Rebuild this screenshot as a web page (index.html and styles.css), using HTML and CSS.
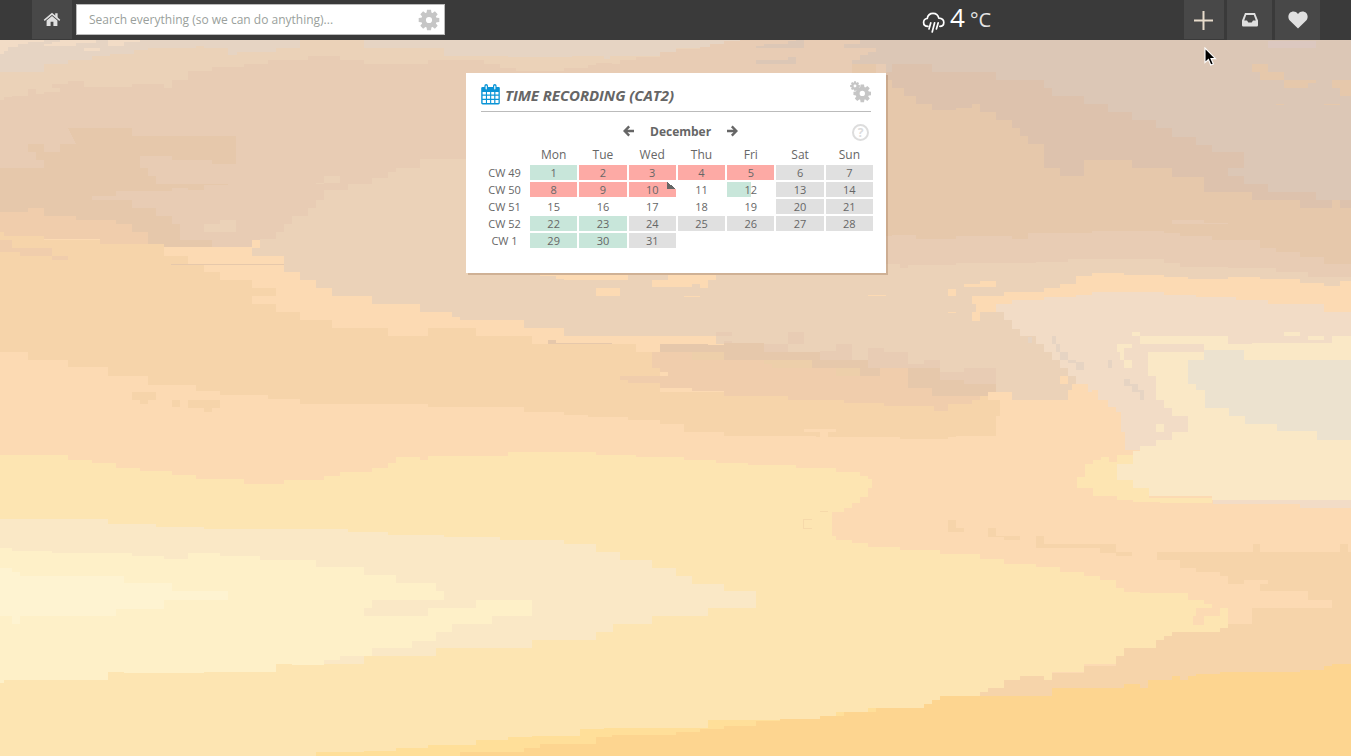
FILE: index.html
```html
<!DOCTYPE html>
<html lang="en">
<head>
<meta charset="utf-8">
<title>Time Recording</title>
<link rel="stylesheet" href="styles.css">
</head>
<body>
<svg class="wallpaper" viewBox="0 0 1351 756" shape-rendering="crispEdges" aria-hidden="true">
  <defs>
    <g id="gear">
      <circle cx="0" cy="0" r="5.4" fill="none" stroke="currentColor" stroke-width="4.6"/>
      <path fill="currentColor" d="M-2-10.3H2L2.6-6H-2.6ZM-2 10.3H2L2.6 6H-2.6ZM-10.3-2V2L-6 2.6V-2.6ZM10.3-2V2L6 2.6V-2.6Z"/>
      <path transform="rotate(45)" fill="currentColor" d="M-2-10.3H2L2.6-6H-2.6ZM-2 10.3H2L2.6 6H-2.6ZM-10.3-2V2L-6 2.6V-2.6ZM10.3-2V2L6 2.6V-2.6Z"/>
    </g>
  </defs>
  <path class="sand" d="M0 40H1351V756H0Z"/>
  <path class="mist" d="M0 40H300V48H276V52H237V55H228V48H204V46H196V48H148V50H134V54H110V56H92V60H68V64H44V72H0ZM364 40H740V41H724V44H710V47H700V48H676V52H660V56H610V59H604V56H572V57H508V56H444V48H364Z"/>
  <path class="shell" d="M0 40H44V42H28V44H18V47H8V51H4V54H0ZM52 42H60V40H96V43H76V46H44V44H52ZM108 40H140V42H124V46H108ZM84 48H100V51H84Z"/>
  <path class="rose" d="M0 100H4V97H12V96H28V89H36V94H44V92H60V88H52V84H68V81H84V87H132V84H164V88H172V80H188V71H212V67H244V64H268V60H308V56H340V60H364V64H428V60H484V64H500V68H516V71H564V68H588V65H596V63H612V64H620V60H636V57H660V52H676V49H700V47H710V44H724V41H740V40H886V159H420V168H396V172H388V178H372V184H348V190H324V200H316V208H308V216H292V224H284V232H276V239H260V240H252V247H0Z"/>
  <path class="sand" d="M324 176H340V183H316V184H324ZM204 224H220V220H236V232H204Z"/>
  <path class="tan" d="M68 128H132V136H236V164H212V160H172V156H140V168H148V176H156V184H228V185H204V190H188V188H172V191H116V196H92V200H132V208H156V216H172V224H180V240H212V247H140V240H0V168H44V160H36V152H28V144H44V152H60V144H76Z"/>
  <path class="apricot" d="M0 212H28V208H44V216H76V220H116V224H132V232H148V247H0Z"/>
  <path class="peach" d="M0 232H4V236H44V239H100V244H140V247H252V240H260V248H252V256H284V272H300V280H316V288H332V296H372V304H420V312H452V317H460V320H524V328H564V336H716V344H780V360H860V368H908V384H932V392H1012V400H1068V390H1351V756H0Z"/>
  <path class="peach" d="M540 275H628V280H564V279H556V276H540ZM596 288H620V296H596ZM668 275H716V280H708V288H700V284H692V287H652V280H668ZM684 296H700V297H684ZM868 295H908V296H868Z"/>
  <path class="wheat" d="M0 232H4V236H44V240H100V244H164V256H188V264H204V272H220V280H252V288H276V296H252V304H276V312H300V320H332V328H388V336H428V328H476V336H532V344H636V352H660V392H1000V416H996V436H956V437H948V439H900V437H816V436H724V432H684V424H660V420H628V417H588V415H564V412H524V407H428V404H300V399H268V395H220V391H196V385H148V376H108V367H68V360H28V352H0Z"/>
  <path class="peach" d="M804 429H836V432H828V437H820V432H804Z"/>
  <path class="apricot" d="M0 240H12V248H52V256H20V252H0ZM52 256H68V260H52ZM652 352H850V368H908V384H980V400H972V404H948V411H934V406H884V403H844V400H788V396H724V391H692V388H660V383H628V380H620V376H668V372H660V368H652Z"/>
  <path class="tan" d="M171 264H284V265H171ZM548 340H556V343H612V344H548ZM660 344H708V345H724V343H764V352H820V360H880V376H908V364H940V376H964V384H996V396H932V388H908V376H860V368H812V360H724V352H660Z"/>
  <path class="rose" d="M716 332H732V336H716ZM724 341H732V343H724ZM764 344H788V352H764ZM788 332H804V344H788ZM836 344H852V360H820V351H836ZM868 348H884V352H908V364H924V360H940V372H964V368H996V384H964V380H940V368H868Z"/>
  <path class="straw" d="M724 352V360H692V352ZM764 360H812V368H772V364H764ZM836 368H860V376H836Z"/>

  <path class="clay" d="M860 40H1351V264H886V73H886V64H852V60H860V55H868V52H876V48H844V44H860ZM804 40V48H756V46H764V44H788V41ZM796 57V64H756V60H788V57Z"/>
  <path class="tan" d="M852 64H876V73H852Z"/>
  <path class="umber" d="M892 64H932V72H996V80H1044V88H1052V96H1084V104H1108V112H1132V120H1156V128H1172V137H1196V145H1212V152H1244V168H1228V176H1244V184H1268V192H1316V200H1351V208H886V72H892Z"/>
  <path class="tan" d="M886 80H892V88H904V96H916V104H932V110H956V108H972V104H980V112H996V120H1012V128H1020V136H1028V144H1044V168H1060V176H1084V160H1132V168H1172V177H1204V192H1252V200H1300V208H1332V200H1340V208H1351V280H886Z"/>
  <path class="tan" d="M1252 64H1268V72H1284V80H1316V83H1308V88H1284V80H1260V72H1252ZM1332 80H1351V96H1340V88H1332ZM1276 104H1284V105H1276ZM1324 104H1340V105H1324Z"/>
  <path class="blush" d="M1268 41H1316V48H1268Z"/>
  <path class="rose" d="M886 236H892V235H916V239H956V236H1012V239H1028V233H1092V231H1164V233H1180V236H1212V240H1260V248H1276V252H1300V257H1324V264H1351V290H886ZM1172 220H1204V223H1228V224H1172Z"/>
  <path class="sand" d="M886 264H900V268H908V265H956V263H1036V262H1068V259H1164V263H1180V267H1228V268H1276V272H1308V277H1351V312H886Z"/>
  <path class="peach" d="M940 287H964V284H980V281H996V287ZM948 289H956V296H948ZM972 296H1004V292H1044V288H1060V284H1076V276H1092V273H1124V275H1164V277H1188V279H1228V277H1260V279H1300V283H1324V286H1340V281H1351V312H1324V304H1012V304H996V312H980V321H972V312H976V304H972ZM1060 376H1068V384H1088V392H1072V384H1060ZM988 392H1012V400H988ZM948 312H956V313H948Z"/>
  <path class="shell" d="M996 304H1012V300H1044V297H1076V295H1092V292H1164V295H1196V297H1236V300H1268V304H1324V312H1351V508H1300V504H1213V450H1125V432H1121V412H1116V407H1108V400H1098V390H1092V392H1088V384H1076V376H1068V368H1060V360H1052V352H1044V344H1036V336H1020V329H1012V320H1004V312H996Z"/>
  <path class="mist" d="M1052 336H1056V344H1060V352H1068V360H1076V362H1084V370H1076V363H1068V360H1060V352H1056V344H1052ZM1108 360H1112V368H1108ZM1028 337H1032V343H1028ZM1124 379H1130V384H1138V390H1144V400H1140V392H1132V386H1124Z"/>
  <path class="butter" d="M1077 488V477H1085V464H1093V460H1101V457H1109V462H1117V455H1133V480H1149V498H1212V503H1160V502H1133V500H1117V496H1093V488Z"/>
  <path class="cream" d="M1132 332H1140V336H1228V344H1252V343H1351V500H1212V496H1149V488H1133V480H1117V464H1133V451H1140V446H1156V440H1172V432H1188V416H1172V408H1164V400H1156V376H1148V352H1204V344H1140V336H1132ZM1117 344H1132V348H1124V360H1132V368H1124V360H1120V352H1117ZM1284 332H1300V336H1284ZM1308 336H1324V340H1308ZM1332 336H1351V343H1332ZM1156 424H1164V432H1156Z"/>
  <path class="fog" d="M1188 360H1204V350H1244V360H1351V440H1317V431H1277V424H1245V416H1229V408H1205V390H1196V384H1188Z"/>

  <path class="butter" d="M0 455H36V455H68V460H92V463H116V468H140V471H172V475H196V479H244V484H284V480H324V476H340V472H372V468H388V463H396V457H420V460H428V456H508V452H596V455H636V457H684V460H716V463H748V465H796V468H836V472H860V476H868V479H872V488H868V497H860V503H852V508H844V512H832V536H836V540H852V543H868V547H900V550H940V554H980V559H1004V564H1036V567H1060V572H1084V576H1100V580H1116V588H1124V592H1140V593H1188V600H1204V604H1212V608H1228V632H1172V636H1164V642H1188V645H1172V648H1124V664H1084V672H1052V756H0Z"/>
  <path class="wheat" d="M1157 552H1351V700H940V696H980V692H988V688H1004V680H1020V676H1044V680H1052V673H1084V666H1116V656H1124V648H1156V640H1164V636H1172V632H1220V628H1228V624H1252V608H1308V600H1308V591H1260V584H1228V576H1220V572H1196V568H1180V560H1157ZM948 520H956V528H964V532H948ZM988 528H996V536H1020V540H1004V537H988ZM1036 536H1044V544H1116V552H1132V556H1116V553H1100V548H1036ZM132 392H156V400H148V404H140V400H132ZM172 400H180V407H172ZM188 400H220V408H212V412H204V408H188ZM1253 544H1260V552H1253ZM1340 544H1348V552H1340Z"/>
  <path class="peach" d="M1260 600H1332V608H1252V624H1236V608H1260ZM1196 608H1220V616H1204V625H1193V616H1196ZM1244 580H1268V584H1244Z"/>
  <path class="trace" d="M812 519.5H803.5V528.5H812M820 511.5H828"/>
  <path class="cream" d="M0 519H108V524H156V527H204V529H348V532H388V535H444V537H500V540H564V544H596V552H620V560H652V568H676V576H692V584H724V591H756V608H708V616H652V624H613V632H596V640H532V648H436V656H364V664H276V560H0Z"/>
  <path class="vanilla" d="M0 548H12V551H52V553H132V556H164V559H188V553H220V556H260V560H316V567H364V575H396V583H436V591H444V600H372V608H364V616H428V608H476V600H524V600H532V616H492V624H452V632H436V641H412V648H372V656H340V660H324V665H292V664H276V672H204V673H124V672H108V680H4V683H0Z"/>
  <path class="ivory" d="M0 568H12V572H20V576H124V583H172V591H228V600H164V609H116V616H20V624H12V616H0Z"/>
  <path class="honey" d="M316 756V752H364V751H396V748H428V745H476V740H508V737H532V736H580V729H604V728H708V720H796V719H836V712H868V708H876V756Z"/>
  <path class="amber" d="M1351 664H1332V666H1324V670H1300V672H1220V674H1196V676H1188V680H1180V676H1172V680H1148V688H1140V684H1124V688H1052V696H972V696H940V700H932V704H924V708H876V712H844V716H820V719H780V721H756V726H724V729H700V732H676V735H612V737H596V744H540V748H524V752H460V756H1351Z"/>
</svg>

<header class="topbar">
  <a class="tile home" aria-label="Home">
    <svg width="18" height="16" viewBox="0 0 18 16"><path class="ink" d="M9 3.9 3.6 8.4V14H7.6V9.8H10.4V14H14.4V8.4Z"/><path d="M1.2 8.3 9 1.8 16.8 8.3" fill="none" stroke="currentColor" stroke-width="1.5"/><path class="ink" d="M12.2 1.2H14.6V6.2L12.2 4.2Z"/></svg>
  </a>
  <div class="search">
    <span class="search-hint">Search everything (so we can do anything)...</span>
    <svg class="search-gear" width="22" height="22" viewBox="-11 -11 22 22"><use href="#gear"/></svg>
  </div>
  <div class="weather">
    <svg width="24" height="24" viewBox="0 0 24 24" fill="none" stroke="currentColor" stroke-width="1.7" stroke-linecap="round" stroke-linejoin="round"><path d="M6 16.3C3.4 16.2 1.6 14.6 1.6 12.4 1.6 10.3 3 8.8 5.2 8.5 5.8 5.2 8 3.3 11 3.3 14 3.3 16.2 5.2 16.8 8.2 19.8 8.4 21.8 10 21.8 12.4 21.8 14.6 20.2 16.2 17.8 16.3"/><path d="M8.8 12.8 7 19M12.6 12.8 10.2 22M16.2 12.8 14.4 19"/></svg>
    <span class="degrees">4</span><span class="unit">°C</span>
  </div>
  <nav class="actions">
    <a class="tile add" aria-label="Add"><svg width="19" height="19" viewBox="0 0 19 19"><path d="M9.5 0V19M0 9.5H19" stroke="#e8dccb" stroke-width="2"/></svg></a>
    <a class="tile wide" aria-label="Inbox"><svg width="16" height="14" viewBox="0 0 16 14"><path class="ink" fill-rule="evenodd" d="M3 0H13L16 7.5V12.2Q16 13.5 14.8 13.5H1.2Q0 13.5 0 12.2V7.5ZM4.2 2 2.2 7.5H5L6.3 9.6H9.7L11 7.5H13.8L11.8 2Z"/></svg></a>
    <a class="tile wide" aria-label="Favorites"><svg width="20" height="18" viewBox="0 0 20 18"><path class="ink" d="M10 17.4 1.8 9.4C-.2 7.2 0 3.8 1.8 2 3.9-.1 8-.2 10 3 12-.2 16.1-.1 18.2 2 20 3.8 20.2 7.2 18.2 9.4Z"/></svg></a>
  </nav>
</header>

<main class="card">
  <div class="card-head">
    <svg class="calendar" width="20" height="21" viewBox="0 0 20 21"><path fill="#0a94d6" d="M1.6 3H17.8Q18.8 3 18.8 4V19Q18.8 20.4 17.4 20.4H1.6Q.2 20.4 .2 19V4Q.2 3 1.6 3Z"/><path fill="#fff" d="M1.6 8H4.9V10.6H1.6ZM6 8H9.1V10.6H6ZM10.2 8H13.2V10.6H10.2ZM14.4 8H17.5V10.6H14.4ZM1.6 11.8H4.9V14.8H1.6ZM6 11.8H9.1V14.8H6ZM10.2 11.8H13.2V14.8H10.2ZM14.4 11.8H17.5V14.8H14.4ZM1.6 16H4.9V19H1.6ZM6 16H9.1V19H6ZM10.2 16H13.2V19H10.2ZM14.4 16H17.5V19H14.4Z"/><path d="M5.2 1.8V5M13.8 1.8V5" stroke="#0a94d6" stroke-width="3.6" stroke-linecap="round"/><path d="M5.2 2V4.8M13.8 2V4.8" stroke="#fff" stroke-width="1.2" stroke-linecap="round"/></svg>
    <h1>TIME RECORDING (CAT2)</h1>
    <svg class="gears" width="21" height="22" viewBox="0 0 21 22"><use href="#gear" transform="translate(12.3 12.4) scale(.86)"/><use href="#gear" transform="translate(5 5) scale(.47)"/></svg>
  </div>
  <div class="month">
    <svg width="12" height="12" viewBox="0 0 12 12"><path d="M11 6H2M6.2 1.4 1.6 6 6.2 10.6" fill="none" stroke="currentColor" stroke-width="2.4"/></svg>
    <strong>December</strong>
    <svg width="12" height="12" viewBox="0 0 12 12"><path d="M1 6H10M5.8 1.4 10.4 6 5.8 10.6" fill="none" stroke="currentColor" stroke-width="2.4"/></svg>
    <span class="help">?</span>
  </div>
  <div class="grid days"><span></span><span>Mon</span><span>Tue</span><span>Wed</span><span>Thu</span><span>Fri</span><span>Sat</span><span>Sun</span></div>
  <div class="grid dates">
    <span class="week">CW 49</span><span class="done">1</span><span class="open">2</span><span class="open">3</span><span class="open">4</span><span class="open">5</span><span class="off">6</span><span class="off">7</span>
    <span class="week">CW 50</span><span class="open">8</span><span class="open">9</span><span class="open today">10</span><span>11</span><span class="half">12</span><span class="off">13</span><span class="off">14</span>
    <span class="week">CW 51</span><span>15</span><span>16</span><span>17</span><span>18</span><span>19</span><span class="off">20</span><span class="off">21</span>
    <span class="week">CW 52</span><span class="done">22</span><span class="done">23</span><span class="off">24</span><span class="off">25</span><span class="off">26</span><span class="off">27</span><span class="off">28</span>
    <span class="week">CW 1</span><span class="done">29</span><span class="done">30</span><span class="off">31</span>
  </div>
</main>
<svg class="pointer" width="13" height="20" viewBox="0 0 13 20"><path d="M1 1V15.6L4.4 12.5 6.8 18 9.4 16.9 7 11.6H11.5Z" fill="#000" stroke="#fff" stroke-width="1.1"/></svg>
</body>
</html>
```
FILE: styles.css
```css
* { box-sizing: border-box; }
body { margin: 0; height: 756px; overflow: hidden; font-family: "Open Sans", sans-serif; color: #666; }
svg { display: block; flex: none; }
.ink { fill: currentColor; }

/* Sky bands */
.wallpaper { position: absolute; left: 0; top: 0; width: 1351px; height: 756px; z-index: -1; }
.sand { fill: #ebd2b8; }
.mist { fill: #e6d4c3; }
.shell { fill: #f2dcc6; }
.rose { fill: #e8ccb4; }
.tan { fill: #e6c8ab; }
.umber { fill: #ddc2ad; }
.clay { fill: #dcc7b6; }
.blush { fill: #dcc8c0; }
.straw { fill: #edcfaa; }
.apricot { fill: #f0cdac; }
.peach { fill: #fcdab3; }
.wheat { fill: #f6d4aa; }
.butter { fill: #fde5b2; }
.cream { fill: #fae8c6; }
.vanilla { fill: #fef0c8; }
.ivory { fill: #fef3d1; }
.fog { fill: #ece2cf; }
.honey { fill: #ffdf99; }
.amber { fill: #fdd590; }
.trace { fill: none; stroke: #f6d9aa; }

/* Top bar */
.topbar { display: flex; height: 40px; padding: 0 31px 0 32px; background: #3a3a3a; color: #e0e0e0; }
.tile { display: flex; align-items: center; justify-content: center; width: 40px; height: 39px; background: #484848; }
.tile.wide { width: 45px; height: 40px; }
.tile.add { padding-right: 1px; padding-top: 1px; }
.search { display: flex; align-items: center; justify-content: space-between; width: 369px; height: 31px; margin: 4px 0 0 4px; padding: 0 4px 0 12px; border: 1px solid #bbb; background: #fff; }
.search-hint { font-size: 12px; color: #9a9f9c; white-space: nowrap; }
.search-gear, .gears { color: #c6c6c6; }
.weather { display: flex; width: 262px; margin-left: 477px; color: #fff; }
.weather svg { margin-top: 10px; }
.degrees { margin-left: 4px; font-size: 26px; line-height: 34px; }
.unit { margin-left: 5px; font-size: 20px; line-height: 40px; color: #e4e4e4; }
.actions { display: flex; gap: 3px; margin-left: auto; }

/* Calendar card */
.card { width: 420px; height: 200px; margin: 33px 0 0 466px; padding: 0 15px; background: #fff; box-shadow: 2px 2px 0 rgba(150, 110, 75, .32); }
.card-head { display: flex; height: 39px; padding-top: 10px; border-bottom: 1px solid #bbb; }
.card-head h1 { margin: 0 auto 0 4px; font-size: 15px; line-height: 25px; font-style: italic; font-weight: 700; letter-spacing: -.05px; white-space: nowrap; }
.calendar { margin-top: 1px; }
.gears { margin-top: -2px; }
.month { display: flex; align-items: center; height: 34px; margin-top: 2px; padding-left: 142px; font-size: 12px; }
.month strong { margin: 0 15px; }
.help { display: flex; align-items: center; justify-content: center; width: 17px; height: 17px; margin: 3px 2px 0 auto; border: 2px solid #ddd; border-radius: 50%; color: #ddd; font-size: 12px; font-weight: 700; }
.grid { display: grid; grid-template-columns: 49px repeat(7, 1fr); column-gap: 2px; width: 394px; margin-left: -2px; text-align: center; }
.days { height: 17px; font-size: 12px; line-height: 14px; }
.dates { grid-auto-rows: 15px; row-gap: 2px; font-size: 11px; line-height: 16px; }
.week { padding-left: 2px; }
.done { background: #c8e6da; }
.open { background: #fdaaa5; }
.off { background: #e0e0e0; }
.half { background: linear-gradient(90deg, #c8e6da 50%, #fff 50%); }
.today { background: linear-gradient(to top right, #666 50%, #fff 50%) right top / 9px 7px no-repeat, #fdaaa5; }

.pointer { position: absolute; left: 1204px; top: 47px; }
```
